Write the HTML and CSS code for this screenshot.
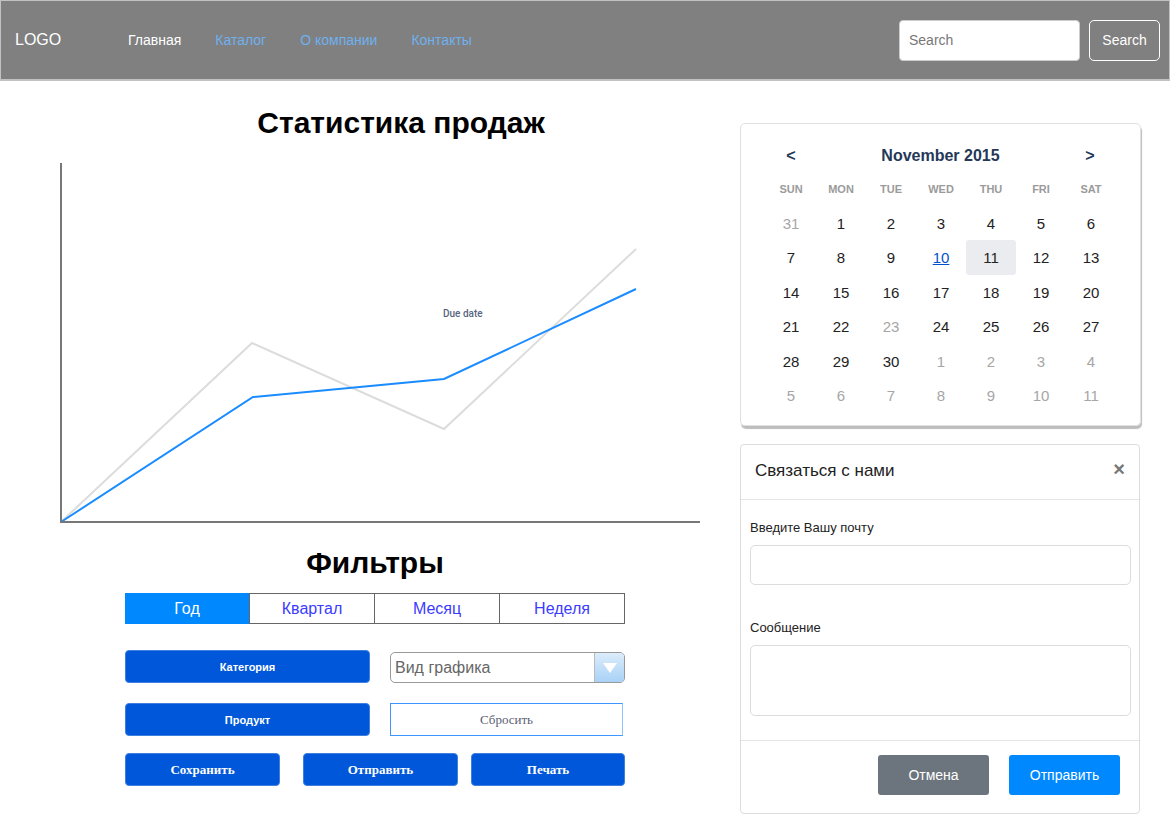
FILE: index.html
```html
<!DOCTYPE html>
<html lang="ru">
<head>
<meta charset="utf-8">
<title>Статистика продаж</title>
<link rel="stylesheet" href="styles.css">
</head>
<body>
<header class="topbar">
  <div class="logo">LOGO</div>
  <nav class="nav">
    <a class="nav-link active" href="#">Главная</a>
    <a class="nav-link" href="#">Каталог</a>
    <a class="nav-link" href="#">О компании</a>
    <a class="nav-link" href="#">Контакты</a>
  </nav>
  <form class="search">
    <input class="search-input" type="text" placeholder="Search">
    <button class="search-btn" type="button">Search</button>
  </form>
</header>

<main class="main">
  <section class="left">
    <h1 class="title">Статистика продаж</h1>
    <svg class="chart" width="740" height="400" viewBox="0 0 740 400">
      <polyline points="61,382 252,203 444,289 636,109" fill="none" stroke="#dcdcdc" stroke-width="2"/>
      <polyline points="61,382 253,257 444,239 636,149" fill="none" stroke="#1a8cff" stroke-width="2"/>
      <line x1="61" y1="23" x2="61" y2="383" stroke="#777" stroke-width="2"/>
      <line x1="60" y1="382" x2="700" y2="382" stroke="#777" stroke-width="2"/>
      <text x="443" y="177" class="chart-label">Due date</text>
    </svg>

    <h2 class="subtitle">Фильтры</h2>
    <div class="tabs">
      <button class="tab active" type="button">Год</button>
      <button class="tab" type="button">Квартал</button>
      <button class="tab" type="button">Месяц</button>
      <button class="tab" type="button">Неделя</button>
    </div>

    <div class="controls">
      <div class="row">
        <button class="btn btn-sans wide" type="button">Категория</button>
        <div class="select">
          <span class="select-text">Вид графика</span>
          <span class="select-arrow"><svg width="14" height="10" viewBox="0 0 14 10"><polygon points="0,0 14,0 7,10" fill="#fff"/></svg></span>
        </div>
      </div>
      <div class="row">
        <button class="btn btn-sans wide" type="button">Продукт</button>
        <button class="btn-outline" type="button">Сбросить</button>
      </div>
      <div class="row row3">
        <button class="btn btn-serif b1" type="button">Сохранить</button>
        <button class="btn btn-serif b2" type="button">Отправить</button>
        <button class="btn btn-serif b3" type="button">Печать</button>
      </div>
    </div>
  </section>

  <aside class="right">
    <div class="calendar">
      <div class="cal-head">
        <span class="cal-nav">&lt;</span>
        <span class="cal-month">November 2015</span>
        <span class="cal-nav">&gt;</span>
      </div>
      <div class="cal-grid cal-days">
        <span>SUN</span><span>MON</span><span>TUE</span><span>WED</span><span>THU</span><span>FRI</span><span>SAT</span>
      </div>
      <div class="cal-grid cal-dates">
        <span class="muted">31</span><span>1</span><span>2</span><span>3</span><span>4</span><span>5</span><span>6</span>
        <span>7</span><span>8</span><span>9</span><span class="today">10</span><span class="selected">11</span><span>12</span><span>13</span>
        <span>14</span><span>15</span><span>16</span><span>17</span><span>18</span><span>19</span><span>20</span>
        <span>21</span><span>22</span><span class="muted">23</span><span>24</span><span>25</span><span>26</span><span>27</span>
        <span>28</span><span>29</span><span>30</span><span class="muted">1</span><span class="muted">2</span><span class="muted">3</span><span class="muted">4</span>
        <span class="muted">5</span><span class="muted">6</span><span class="muted">7</span><span class="muted">8</span><span class="muted">9</span><span class="muted">10</span><span class="muted">11</span>
      </div>
    </div>

    <div class="contact">
      <div class="contact-head">
        <span class="contact-title">Связаться с нами</span>
        <span class="close">&times;</span>
      </div>
      <div class="contact-body">
        <label class="label">Введите Вашу почту</label>
        <input class="field" type="text">
        <label class="label label2">Сообщение</label>
        <textarea class="field area"></textarea>
      </div>
      <div class="contact-foot">
        <button class="fbtn cancel" type="button">Отмена</button>
        <button class="fbtn send" type="button">Отправить</button>
      </div>
    </div>
  </aside>
</main>
</body>
</html>
```

FILE: styles.css
```css
* { box-sizing: border-box; }
body {
  margin: 0;
  font-family: "Liberation Sans", Arial, sans-serif;
  background: #fff;
  color: #222;
}

.topbar {
  height: 81px;
  background: #808080;
  border: 1px solid #c2c2c2;
  border-bottom: 2px solid #c2c2c2;
  display: flex;
  align-items: center;
  padding: 0 9px 0 14px;
}
.logo {
  color: #fff;
  font-size: 16px;
  width: 113px;
}
.nav { display: flex; align-items: center; }
.nav-link {
  color: #6fb0ee;
  text-decoration: none;
  font-size: 14px;
  margin-right: 34px;
}
.nav-link.active { color: #fff; }
.search { margin-left: auto; display: flex; align-items: center; }
.search-input {
  width: 181px;
  height: 41px;
  border: 1px solid #ccc;
  border-radius: 4px;
  padding: 0 9px;
  font-family: "Liberation Sans", Arial, sans-serif;
  font-size: 14px;
  color: #333;
}
.search-input::placeholder { color: #777; }
.search-btn {
  margin-left: 9px;
  width: 71px;
  height: 41px;
  border: 1px solid #fff;
  border-radius: 5px;
  background: transparent;
  color: #fff;
  font-family: "Liberation Sans", Arial, sans-serif;
  font-size: 14px;
}

.main { display: flex; }
.left { width: 740px; display: flex; flex-direction: column; }
.title {
  margin: 26px 0 0 0;
  padding-left: 62px;
  text-align: center;
  font-size: 30px;
  line-height: 32px;
  font-weight: bold;
  color: #000;
}
.chart { display: block; margin-top: 1px; }
.chart-label {
  font-family: Roboto, "Liberation Sans", sans-serif;
  font-size: 10px;
  font-weight: 500;
  fill: #5b6581;
}
.subtitle {
  margin: 7px 0 0 0;
  width: 750px;
  text-align: center;
  font-size: 30px;
  line-height: 32px;
  font-weight: bold;
  color: #000;
}
.tabs {
  margin: 14px 0 0 125px;
  width: 500px;
  height: 31px;
  display: flex;
  border: 1px solid #666;
  border-left: none;
}
.tab {
  flex: 1;
  border: none;
  border-left: 1px solid #666;
  background: #fff;
  color: #3b3bff;
  font-family: "Liberation Sans", Arial, sans-serif;
  font-size: 16px;
  padding: 0;
}
.tab.active {
  background: #0088ff;
  color: #fff;
  border-left: none;
  margin: -1px 0 -1px 0;
  height: 31px;
}

.controls { margin: 26px 0 0 125px; display: flex; flex-direction: column; gap: 20px; }
.controls .row { display: flex; align-items: center; gap: 20px; height: 33px; }
.controls .row3 { margin-top: -3px; gap: 0; }
.btn {
  height: 33px;
  background: #0057d9;
  color: #fff;
  border: 1px solid #3f7fe0;
  border-radius: 4px;
  padding: 0;
  font-weight: bold;
}
.btn-sans { font-family: "Liberation Sans", Arial, sans-serif; font-size: 11px; }
.btn-serif { font-family: "Liberation Serif", "Times New Roman", serif; font-size: 13px; }
.wide { width: 245px; }
.b1 { width: 155px; }
.b2 { width: 155px; margin-left: 23px; }
.b3 { width: 154px; margin-left: 13px; }
.select {
  width: 235px;
  height: 31px;
  margin-top: 2px;
  border: 1px solid #999;
  border-radius: 5px;
  display: flex;
  align-items: center;
  overflow: hidden;
}
.select-text {
  flex: 1;
  padding-left: 4px;
  font-size: 16px;
  color: #666;
}
.select-arrow {
  width: 30px;
  height: 100%;
  border-left: 1px solid #bbb;
  background: linear-gradient(#dcecfb, #a8d2f6);
  display: flex;
  align-items: center;
  justify-content: center;
}
.btn-outline {
  width: 233px;
  height: 33px;
  background: #fff;
  border: 1px solid #3d96ff;
  border-right: 1px solid #8cc4ff;
  color: #5a6072;
  font-family: "Liberation Serif", "Times New Roman", serif;
  font-size: 13px;
  padding: 0;
}

.right { width: 401px; margin-top: 42px; display: flex; flex-direction: column; }
.calendar {
  height: 303px;
  border: 1px solid #e0e0e0;
  border-radius: 5px;
  box-shadow: 1px 3px 1px #bdbdbd;
  padding: 16px 25px 0 25px;
}
.cal-head {
  display: grid;
  grid-template-columns: 50px 1fr 50px;
  height: 32px;
  align-items: center;
  text-align: center;
  color: #253858;
  font-weight: bold;
}
.cal-nav { font-size: 16px; }
.cal-month { font-size: 16px; }
.cal-grid { display: grid; grid-template-columns: repeat(7, 50px); text-align: center; }
.cal-days span {
  height: 34px;
  line-height: 34px;
  font-size: 11px;
  font-weight: bold;
  color: #9b9b9b;
}
.cal-dates span {
  height: 34.4px;
  line-height: 35px;
  font-size: 15px;
  color: #222;
  border-radius: 3px;
}
.cal-dates .muted { color: #a6a6a6; }
.cal-dates .today { color: #0052cc; text-decoration: underline; }
.cal-dates .selected { background: #ebecf0; }

.contact {
  margin-top: 18px;
  height: 370px;
  width: 400px;
  border: 1px solid #dcdcdc;
  border-radius: 4px;
  display: flex;
  flex-direction: column;
}
.contact-head {
  height: 55px;
  border-bottom: 1px solid #e6e6e6;
  display: flex;
  align-items: center;
  justify-content: space-between;
  padding: 0 14px 0 14px;
}
.contact-title { font-size: 17px; color: #222; margin-top: -3px; }
.close { font-size: 20px; color: #777; font-weight: bold; margin-top: -5px; }
.contact-body {
  padding: 18px 9px 0 9px;
  height: 241px;
  border-bottom: 1px solid #e6e6e6;
  display: flex;
  flex-direction: column;
}
.label { font-size: 13px; line-height: 20px; color: #222; }
.label2 { margin-top: 33px; }
.field {
  margin-top: 7px;
  width: 381px;
  height: 40px;
  border: 1px solid #dcdcdc;
  border-radius: 5px;
  resize: none;
}
.area { height: 71px; }
.contact-foot {
  display: flex;
  justify-content: flex-end;
  gap: 20px;
  padding: 14px 19px 0 0;
}
.fbtn {
  width: 111px;
  height: 40px;
  border: none;
  border-radius: 3px;
  color: #fff;
  font-family: "Liberation Sans", Arial, sans-serif;
  font-size: 14px;
}
.cancel { background: #6c757d; }
.send { background: #0088ff; }
```
